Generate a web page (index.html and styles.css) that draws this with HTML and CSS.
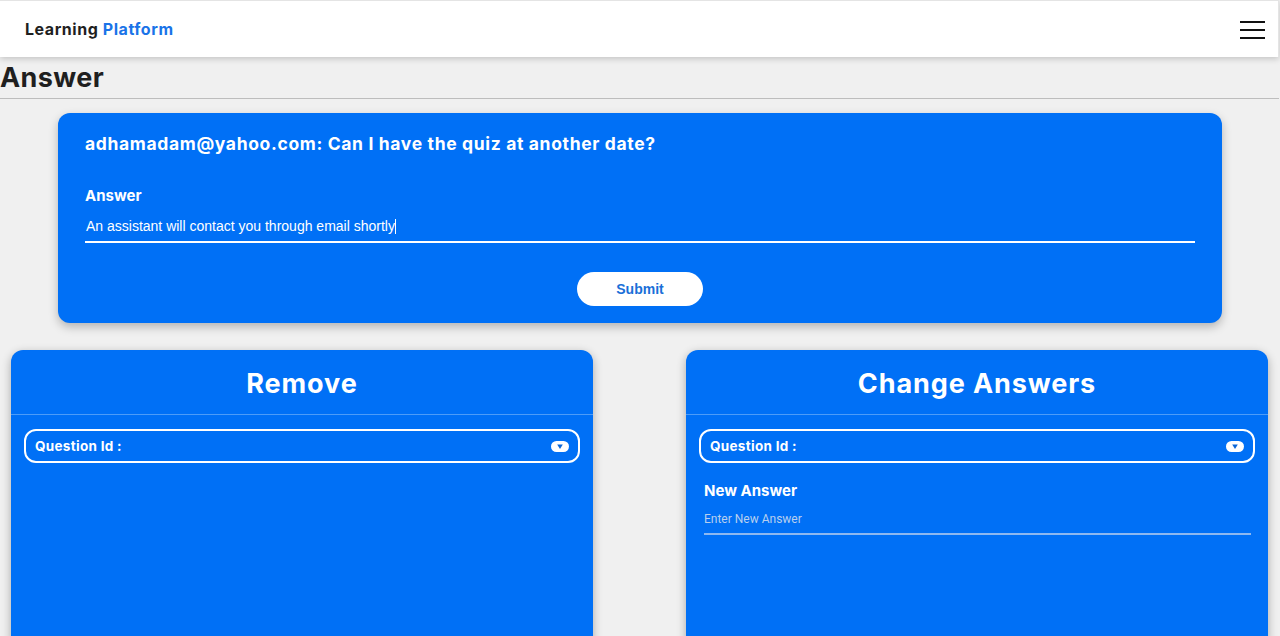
FILE: index.html
```html
<!DOCTYPE html>
<html lang="en">
<head>
<meta charset="utf-8">
<title>Answer</title>
<link rel="stylesheet" href="styles.css">
</head>
<body>
<header class="navbar">
  <div class="brand">Learning <span class="brand-accent">Platform</span></div>
  <button class="menu-btn" aria-label="menu">
    <span class="bar"></span><span class="bar"></span><span class="bar"></span>
  </button>
</header>
<h1 class="page-title">Answer</h1>
<section class="answer-card">
  <h2 class="question">adhamadam@yahoo.com: Can I have the quiz at another date?</h2>
  <label class="field-label">Answer</label>
  <div class="answer-input">An assistant will contact you through email shortly<span class="caret"></span></div>
  <div class="submit-row"><button class="submit-btn">Submit</button></div>
</section>
<div class="panels">
  <section class="panel">
    <h2 class="panel-title">Remove</h2>
    <div class="panel-body">
      <div class="select">
        <span>Question Id :</span>
        <svg class="select-icon" width="18" height="11" viewBox="0 0 18 11"><rect x="0" y="0" width="18" height="11" rx="5.5" fill="#fff"/><path d="M6.2 3.6 L11.8 3.6 L9 8 Z" fill="#0a66d8"/></svg>
      </div>
    </div>
  </section>
  <section class="panel">
    <h2 class="panel-title">Change Answers</h2>
    <div class="panel-body">
      <div class="select">
        <span>Question Id :</span>
        <svg class="select-icon" width="18" height="11" viewBox="0 0 18 11"><rect x="0" y="0" width="18" height="11" rx="5.5" fill="#fff"/><path d="M6.2 3.6 L11.8 3.6 L9 8 Z" fill="#0a66d8"/></svg>
      </div>
      <label class="field-label new-label">New Answer</label>
      <div class="new-input">Enter New Answer</div>
    </div>
  </section>
</div>
</body>
</html>
```
FILE: styles.css
```css
* { box-sizing: border-box; }
html, body { margin: 0; padding: 0; }
body {
  background: #f0f0f0;
  font-family: "Inter", "Liberation Sans", sans-serif;
  height: 636px;
  overflow: hidden;
}
.navbar {
  height: 57px;
  width: 1279px;
  background: #fff;
  border-top: 1px solid #e4e4e4;
  border-right: 1px solid #e4e4e4;
  display: flex;
  align-items: center;
  justify-content: space-between;
  padding: 0 13px 0 25px;
  box-shadow: 0 2px 6px rgba(0,0,0,0.18);
  position: relative;
}
.brand {
  font-weight: 700;
  font-size: 16px;
  color: #1f1f1f;
  letter-spacing: 0.55px;
}
.brand-accent { color: #1a73e8; }
.menu-btn {
  background: none;
  border: 0;
  padding: 0;
  width: 25px;
  display: flex;
  flex-direction: column;
  gap: 6px;
  margin-top: 2px;
}
.bar { display: block; height: 2px; background: #111; width: 25px; }
.page-title {
  margin: 0;
  padding: 5px 0 4px 0;
  font-size: 27px;
  font-weight: 700;
  color: #1f1f1f;
  line-height: 32px;
  width: 1279px;
  border-bottom: 1px solid #bdbdbd;
  letter-spacing: 0.4px;
}
.answer-card {
  width: 1164px;
  margin: 14px auto 0;
  background: #0070f6;
  border-radius: 12px;
  padding: 20px 27px 17px;
  box-shadow: 0 4px 10px rgba(0,0,0,0.25);
  color: #fff;
  height: 210px;
}
.question {
  margin: 0;
  font-size: 17.5px;
  font-weight: 700;
  line-height: 22px;
  letter-spacing: 0.65px;
}
.field-label {
  display: block;
  font-weight: 700;
  font-size: 15px;
  margin-top: 31px;
  line-height: 20px;
}
.answer-input {
  margin-top: 12px;
  font-family: "Liberation Sans", Arial, sans-serif;
  font-size: 14px;
  line-height: 16px;
  padding-bottom: 7px;
  border-bottom: 2px solid #fff;
  padding-left: 1px;
}
.caret { display: inline-block; width: 1px; height: 15px; background: #fff; vertical-align: -3px; }
.submit-row { display: flex; justify-content: center; margin-top: 29px; }
.submit-btn {
  width: 126px;
  height: 34px;
  border-radius: 17px;
  border: 0;
  background: #fff;
  color: #1a6fd8;
  font-family: "Liberation Sans", Arial, sans-serif;
  font-weight: 700;
  font-size: 14px;
}
.panels {
  display: flex;
  justify-content: space-between;
  padding: 0 12px 0 11px;
  margin-top: 27px;
}
.panel {
  width: 582px;
  height: 300px;
  background: #0070f6;
  border-radius: 12px;
  box-shadow: 0 3px 10px rgba(0,0,0,0.3);
  color: #fff;
}
.panel-title {
  margin: 0;
  height: 65px;
  border-bottom: 1px solid #4d9cf8;
  text-align: center;
  font-size: 27px;
  font-weight: 700;
  line-height: 68px;
  letter-spacing: 0.9px;
}
.panel-body { padding: 14px 13px 0; }
.select {
  height: 34px;
  border: 2px solid #fff;
  border-radius: 12px;
  display: flex;
  align-items: center;
  justify-content: space-between;
  padding: 0 9px 0 9px;
  font-size: 13.5px;
  font-weight: 700;
  letter-spacing: 0.3px;
}
.new-label { margin-top: 18px; padding-left: 5px; }
.new-input {
  margin: 11px 4px 0 5px;
  font-family: "Roboto", "Liberation Sans", sans-serif;
  font-size: 12px;
  color: #b8cfee;
  line-height: 14px;
  padding-bottom: 7px;
  border-bottom: 2px solid #8db8f0;
}
```
